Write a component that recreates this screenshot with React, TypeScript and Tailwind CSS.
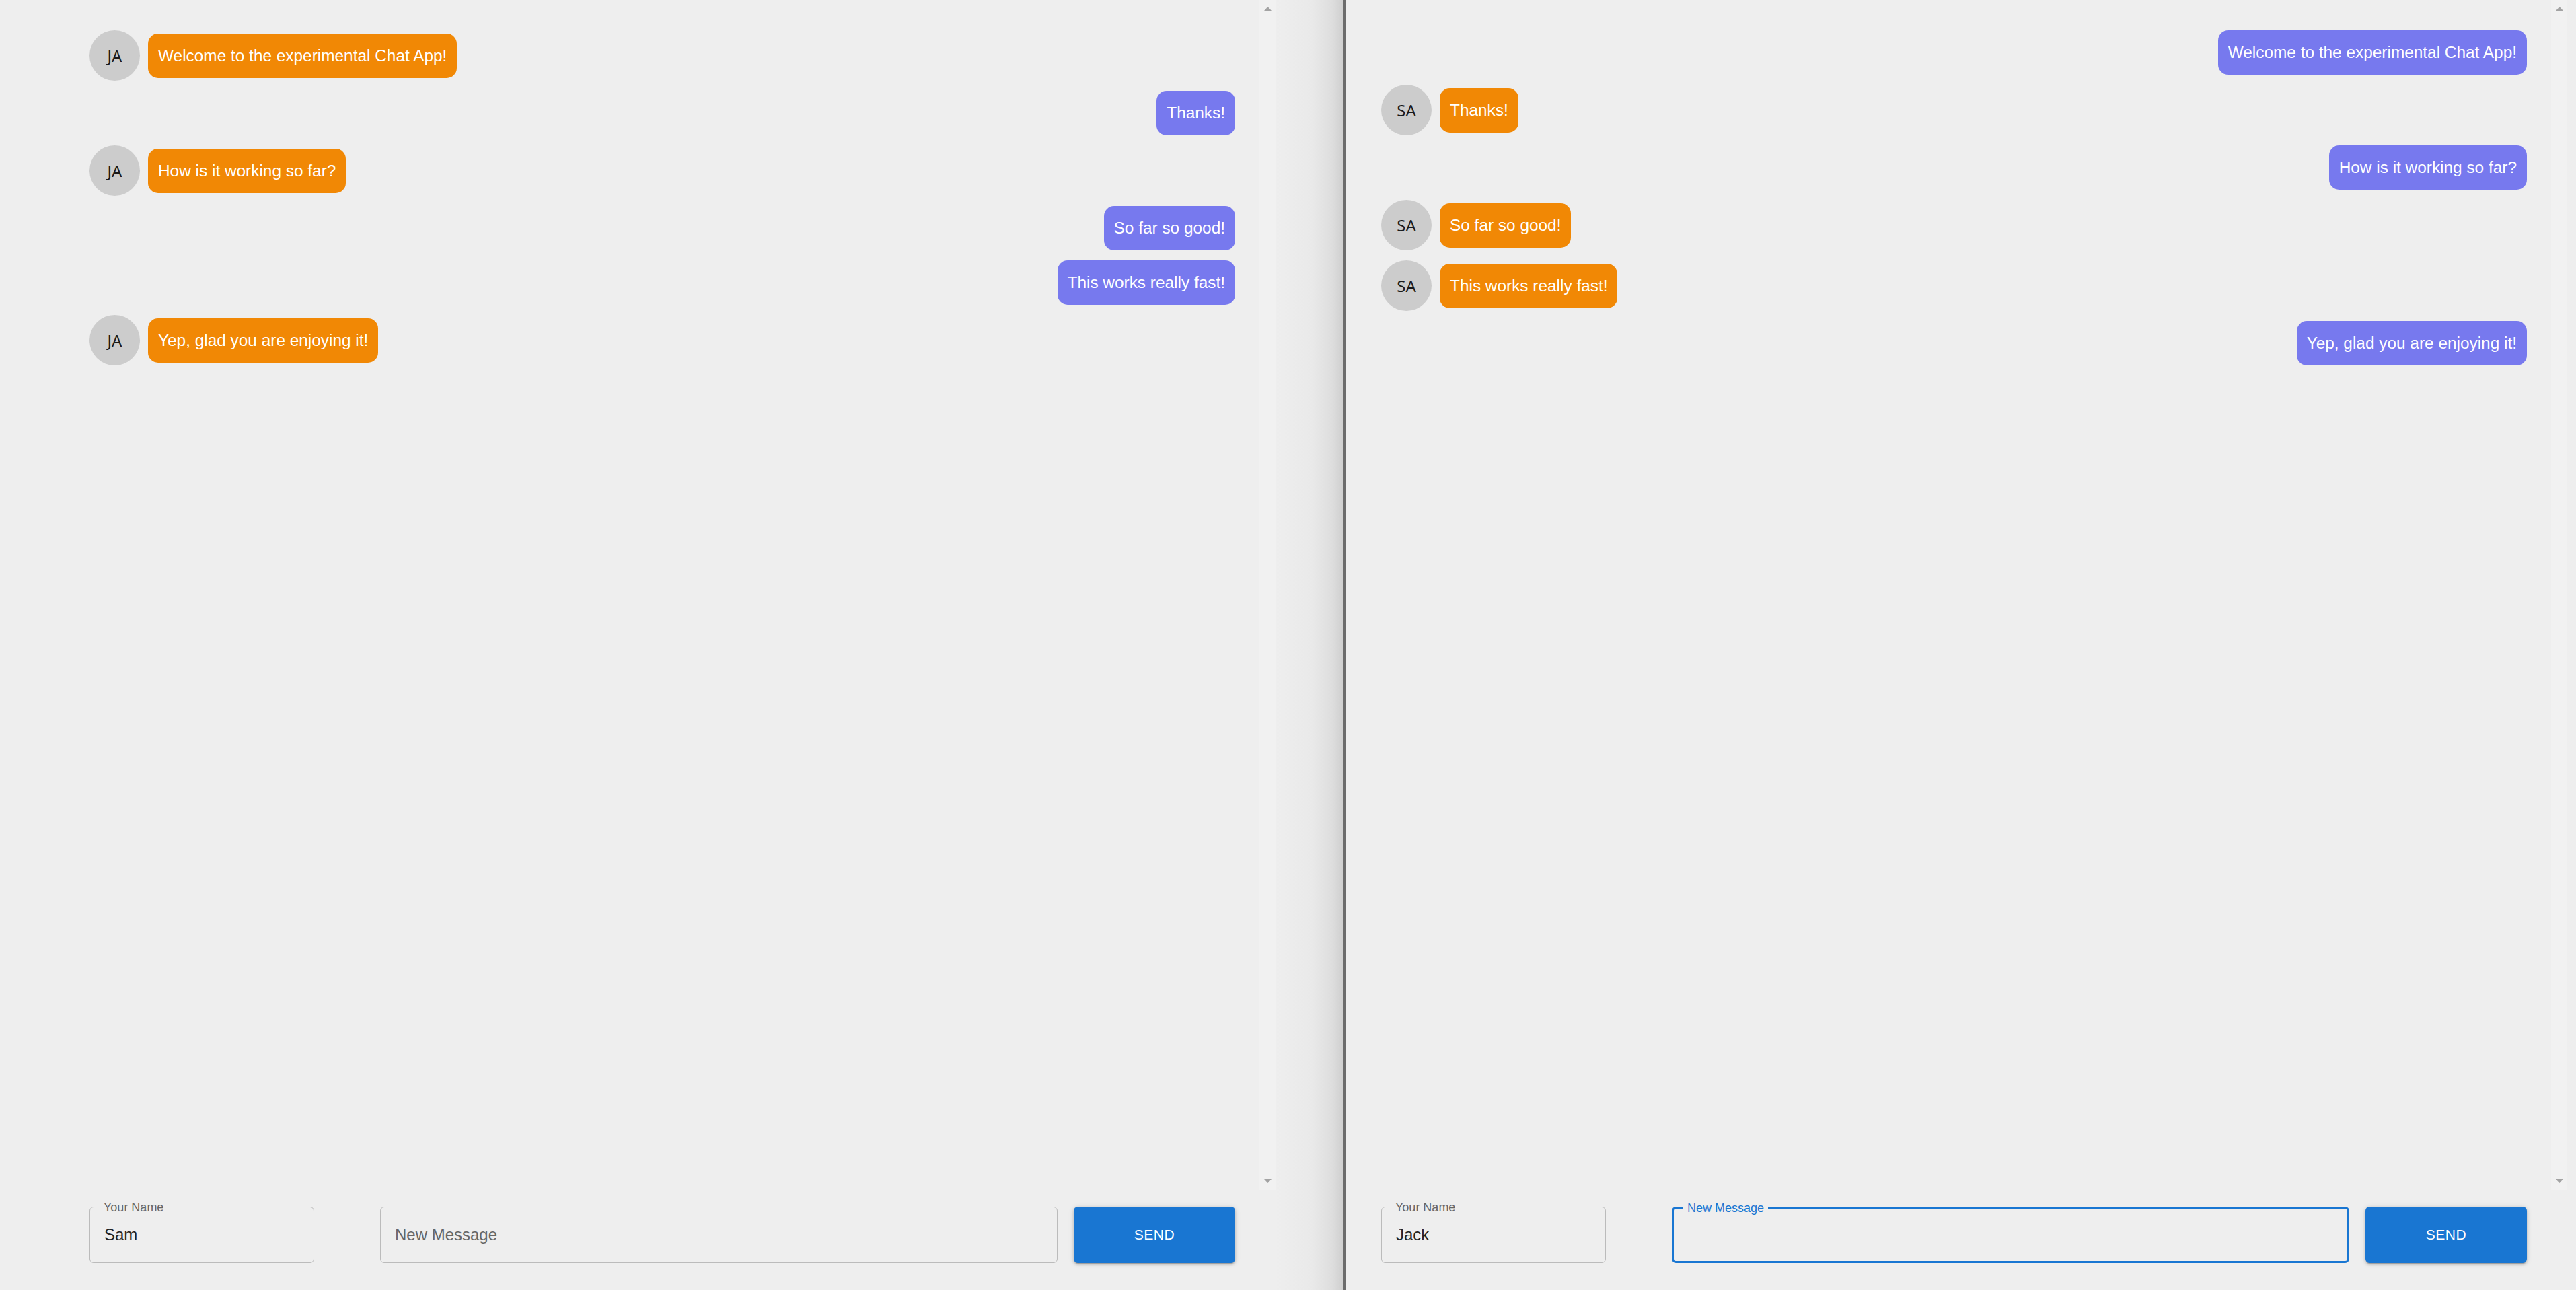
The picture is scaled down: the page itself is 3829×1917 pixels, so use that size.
type Msg = { text: string; mine: boolean };

const leftMessages: Msg[] = [
  { text: 'Welcome to the experimental Chat App!', mine: false },
  { text: 'Thanks!', mine: true },
  { text: 'How is it working so far?', mine: false },
  { text: 'So far so good!', mine: true },
  { text: 'This works really fast!', mine: true },
  { text: 'Yep, glad you are enjoying it!', mine: false },
];

const rightMessages: Msg[] = leftMessages.map((m) => ({ ...m, mine: !m.mine }));

const sans = "font-['Liberation_Sans',Arial,sans-serif]";

const Avatar = ({ initials }: { initials: string }) => (
  <div className="w-[75px] h-[75px] shrink-0 rounded-full bg-[#cccccc] flex items-center justify-center text-[24px] text-[#1a1a1a] font-['Noto_Sans',sans-serif]">
    {initials}
  </div>
);

const Bubble = ({ text, mine }: { text: string; mine: boolean }) => (
  <div
    className={`${sans} rounded-[15px] px-[15px] py-[15px] text-[24.4px] leading-[36px] text-white ${
      mine ? 'bg-[#7779ee]' : 'bg-[#f18805]'
    }`}
  >
    {text}
  </div>
);

const Triangle = ({ up }: { up: boolean }) => (
  <svg width="11" height="6" viewBox="0 0 11 6">
    <path d={up ? 'M0 6 L5.5 0 L11 6 Z' : 'M0 0 L5.5 6 L11 0 Z'} fill="#a3a3a3" />
  </svg>
);

const Scrollbar = () => (
  <div className="w-[24px] h-full bg-[#f1f1f1] flex flex-col items-center justify-between pt-[10px] pb-[10px]">
    <Triangle up />
    <Triangle up={false} />
  </div>
);

// Outlined text field with the small label sitting in the border notch
const Field = ({
  label,
  value,
  focused,
  className,
}: {
  label?: string;
  value?: string;
  focused?: boolean;
  className: string;
}) => (
  <div
    className={`${className} ${sans} relative h-[84px] rounded-[6px] flex items-center px-[21px] ${
      focused ? 'border-[3px] border-[#1976d2] pl-[19px]' : 'border border-[#bbbbbb]'
    }`}
  >
    {label && (
      <span
        className={`absolute top-0 -translate-y-1/2 left-[14px] px-[6px] bg-[#eeeeee] text-[18px] leading-none ${
          focused ? 'text-[#1976d2] -mt-[1px] left-[12px]' : 'text-[#666666]'
        }`}
      >
        {label}
      </span>
    )}
    {focused && <div className="w-[1px] h-[27px] bg-black" />}
    {value && <span className="text-[24px] text-[#222222]">{value}</span>}
    {!label && !value && <span className="text-[24px] text-[#666666]">New Message</span>}
  </div>
);

const ChatPane = ({
  messages,
  initials,
  name,
  focused,
  padClass,
  widthClass,
}: {
  messages: Msg[];
  initials: string;
  name: string;
  focused: boolean;
  padClass: string;
  widthClass: string;
}) => (
  <div className={`${widthClass} h-full flex flex-col shrink-0`}>
    {/* Message list with scrollbar */}
    <div className="h-[1768px] flex">
      <div className={`flex-1 ${padClass} pr-[36px] pt-[45px] flex flex-col gap-[15px]`}>
        {messages.map((m, i) =>
          m.mine ? (
            <div key={i} className="flex justify-end">
              <Bubble text={m.text} mine />
            </div>
          ) : (
            <div key={i} className="flex items-center gap-[12px]">
              <Avatar initials={initials} />
              <Bubble text={m.text} mine={false} />
            </div>
          )
        )}
      </div>
      <Scrollbar />
    </div>

    {/* Input row */}
    <div className={`flex-1 ${padClass} pr-[60px] pt-[25px] flex items-start`}>
      <Field label="Your Name" value={name} className="w-[334px]" />
      <div className="w-[98px]" />
      {focused ? (
        <Field label="New Message" focused className="flex-1" />
      ) : (
        <Field className="flex-1" />
      )}
      <button
        className={`${sans} ml-[24px] w-[240px] h-[84px] rounded-[6px] bg-[#1976d2] text-white text-[21px] font-medium tracking-[0.6px] shadow-[0_3px_2px_-2px_rgba(0,0,0,0.25),0_2px_4px_0_rgba(0,0,0,0.16),0_1px_8px_0_rgba(0,0,0,0.12)]`}
      >
        SEND
      </button>
    </div>
  </div>
);

export default function App() {
  return (
    <div className="w-screen h-screen bg-[#eeeeee] flex overflow-hidden">
      {/* Left pane */}
      <div className="w-[1996px] h-full flex shrink-0">
        <ChatPane
          messages={leftMessages}
          initials="JA"
          name="Sam"
          focused={false}
          padClass="pl-[133px]"
          widthClass="w-[1896px]"
        />
        <div className="flex-1 h-full bg-[linear-gradient(to_right,#eeeeee,#e9e9e9_55%,#dddddd_85%,#cfcfcf)]" />
      </div>

      {/* Divider */}
      <div className="w-[4px] h-full bg-[#6b6b6b] shrink-0" />

      {/* Right pane */}
      <div className="flex-1 h-full flex">
        <ChatPane
          messages={rightMessages}
          initials="SA"
          name="Jack"
          focused
          padClass="pl-[53px]"
          widthClass="w-[1816px]"
        />
      </div>
    </div>
  );
}
